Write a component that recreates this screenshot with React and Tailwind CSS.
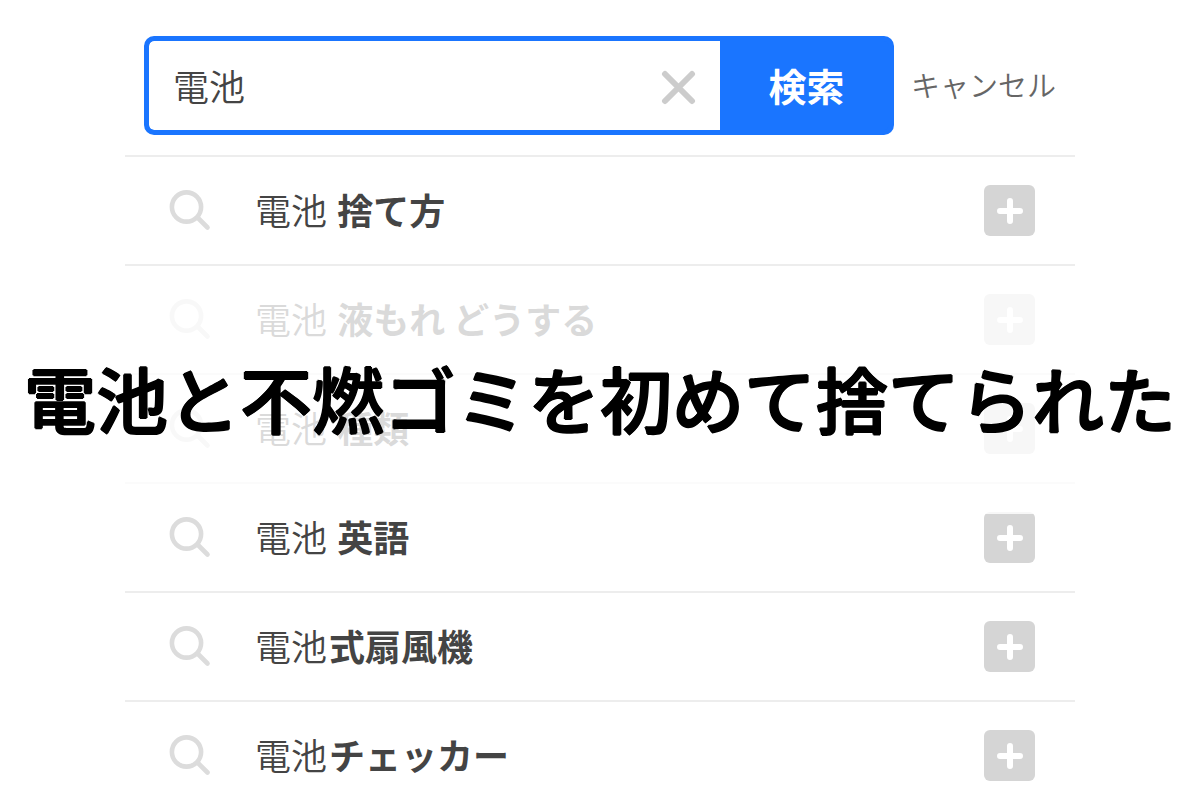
const suggestions = [
  { base: "電池", extra: " 捨て方" },
  { base: "電池", extra: " 液もれ どうする" },
  { base: "電池", extra: " 種類" },
  { base: "電池", extra: " 英語" },
  { base: "電池", extra: "式扇風機" },
  { base: "電池", extra: "チェッカー" },
];

function SearchIcon() {
  return (
    <svg width="42" height="42" viewBox="0 0 42 42" fill="none" stroke="#dcdcdc" strokeLinecap="round" aria-hidden="true">
      <circle cx="17.5" cy="17" r="14.6" strokeWidth="4.6" />
      <path d="M28.5 27.5L38.5 37.5" strokeWidth="4.6" />
    </svg>
  );
}

function SearchBar() {
  return (
    <form className="flex items-center pt-9 pb-5 pl-[19px] pr-[19px]" onSubmit={(e) => e.preventDefault()}>
      <div className="flex h-[99px] min-w-0 flex-1 overflow-hidden rounded-[10px] border-[5px] border-[#1a75ff] bg-[#1a75ff]">
        <div className="flex min-w-0 flex-1 items-center rounded-l-[5px] bg-white pl-6 pr-6">
          <input
            type="text"
            aria-label="検索キーワード"
            defaultValue="電池"
            className="min-w-0 flex-1 bg-transparent pb-0.5 text-[36px] leading-[52px] font-[350] text-[#444] outline-none"
          />
          <button type="button" aria-label="クリア" className="pt-1">
            <svg className="block" width="35" height="35" viewBox="0 0 35 35" stroke="#ccc" strokeWidth="6" strokeLinecap="round">
              <path d="M4 4L31 31M31 4L4 31" />
            </svg>
          </button>
        </div>
        <button type="submit" className="w-[169px] pb-0.5 pl-1 text-[38px] leading-[52px] font-bold text-white">
          検索
        </button>
      </div>
      <button type="button" className="ml-[17px] pb-1 text-[29px] leading-10 font-[350] whitespace-nowrap text-[#666]">
        キャンセル
      </button>
    </form>
  );
}

function SuggestionRow({ base, extra }) {
  return (
    <li className="flex h-[109px] items-center border-t-2 border-[#ededed] pl-11 pr-10">
      <SearchIcon />
      <p className="ml-11 flex-1 pb-1 text-[36px] leading-[52px] font-[350] whitespace-pre text-[#444]">
        {base}
        <span className="ml-0.5 font-bold">{extra}</span>
      </p>
      <button
        type="button"
        aria-label={`${base}${extra}を追加`}
        className="flex size-[51px] items-center justify-center rounded-md bg-[#d5d5d5]"
      >
        <svg width="26" height="26" viewBox="0 0 26 26" stroke="white" strokeWidth="6" strokeLinecap="round">
          <path d="M13 3V23M3 13H23" />
        </svg>
      </button>
    </li>
  );
}

export default function App() {
  return (
    <main
      lang="ja"
      className="relative h-screen overflow-hidden bg-white font-['Noto_Sans_CJK_JP',sans-serif]"
    >
      <div className="mx-auto max-w-[950px]">
        <SearchBar />
        <ul>
          {suggestions.map((s) => (
            <SuggestionRow key={s.extra} base={s.base} extra={s.extra} />
          ))}
        </ul>
      </div>

      {/* title band over the list, shadows thicken and round off the strokes */}
      <div className="pointer-events-none absolute inset-0 flex items-center">
        <div className="flex h-[228px] w-full items-center justify-center bg-white/80">
          <h1 className="pb-1.5 text-[72px] leading-[104px] font-medium whitespace-nowrap text-black [text-shadow:1px_0_black,-1px_0_black,0_1px_black,0_-1px_black]">
            電池と不燃ゴミを初めて捨てられた
          </h1>
        </div>
      </div>
    </main>
  );
}
